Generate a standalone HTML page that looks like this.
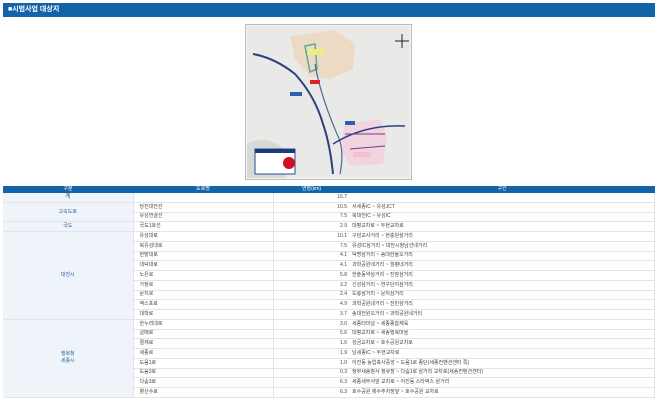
<!DOCTYPE html>
<html><head><meta charset="utf-8"><style>
body{margin:0;width:658px;height:403px;background:#fff;font-family:"Liberation Sans","Noto Sans CJK KR",sans-serif;overflow:hidden;position:relative}
.hd{position:absolute;left:3px;top:3px;width:652px;height:14px;background:#1264a8;color:#fff;font-size:7px;line-height:14px;padding-left:5px;box-sizing:border-box;font-weight:bold}
table{position:absolute;left:3px;top:186px;width:652px;border-collapse:collapse;font-size:5px;color:#444;table-layout:fixed}
td,th{border-bottom:1px solid #e4e4e4;border-right:1px solid #e4e4e4;height:8.75px;padding:0;line-height:7px;white-space:nowrap;overflow:hidden}
th{background:#1264a8;color:#fff;height:7px;line-height:7px;font-weight:normal;border:none}
.g{background:#eef4fa;color:#2a62a0;text-align:center}
.n{padding-left:6px}
.r{text-align:right;padding-right:3px;border-right:none}
.s{padding-left:2px}
</style></head><body>
<div class="hd">■시범사업 대상지</div>
<svg style="position:absolute;left:245px;top:24px" width="167" height="156" viewBox="0 0 167 156">
<rect x="0.5" y="0.5" width="166" height="155" fill="#f4f4f2" stroke="#bbb"/>
<rect x="2" y="2" width="163" height="152" fill="#e9eae7"/>
<path d="M2 120 Q20 110 40 125 L40 154 L2 154Z" fill="#d8d8d4"/>
<path d="M45 12 L90 6 L110 20 L108 45 L85 55 L65 52 L50 35Z" fill="#ecd8c0" opacity=".9"/>
<path d="M100 100 L135 95 L142 112 L138 140 L105 142 L95 125Z" fill="#f0d4e0"/>
<path d="M60 22 L70 20 L72 45 L65 48Z" fill="none" stroke="#5a9" stroke-width="1.5"/>
<path d="M8 30 Q30 34 50 50 Q70 72 78 100 Q85 120 88 150" fill="none" stroke="#2e3f80" stroke-width="2"/>
<path d="M70 40 Q75 70 92 110 Q100 125 95 150" fill="none" stroke="#4a6a9a" stroke-width="1.2"/>
<path d="M88 120 Q120 100 160 102" fill="none" stroke="#2e3f80" stroke-width="1.5"/>
<path d="M100 110 L140 110 M105 125 L140 122" stroke="#7a3a7a" stroke-width="1"/>
<rect x="62" y="25" width="18" height="6" fill="#e8f080"/>
<rect x="65" y="56" width="10" height="4" fill="#e0202a"/>
<rect x="45" y="68" width="12" height="4" fill="#2a60b0"/>
<rect x="100" y="97" width="10" height="4" fill="#2a60b0"/>
<rect x="108" y="128" width="18" height="5" fill="#f4c0d0"/>
<rect x="10" y="125" width="40" height="25" fill="#fff" stroke="#2a4a90"/>
<rect x="10" y="125" width="40" height="4" fill="#1a3a80"/>
<circle cx="44" cy="139" r="6" fill="#d01020"/>
<path d="M157 10 V24 M150 17 H164" stroke="#123" stroke-width="1"/>
</svg>
<table>
<colgroup><col style="width:130px"><col style="width:140px"><col style="width:77px"><col></colgroup>
<tr><th>구분</th><th>도로명</th><th>연장(km)</th><th>구간</th></tr>
<tr><td class="g" style="font-size:6px">계</td><td></td><td class="r">16.7</td><td></td></tr>
<tr><td class="g" rowspan="2">고속도로</td><td class="n">당진대전선</td><td class="r">10.5</td><td class="s">서세종IC ~ 유성JCT</td></tr>
<tr><td class="n">유성연결선</td><td class="r">7.5</td><td class="s">북대전IC ~ 유성IC</td></tr>
<tr><td class="g">국도</td><td class="n">국도1호선</td><td class="r">2.9</td><td class="s">대평교차로 ~ 두현교차로</td></tr>
<tr><td class="g" rowspan="9">대전시</td><td class="n">유성대로</td><td class="r">10.1</td><td class="s">구암교사거리 ~ 현충원삼거리</td></tr>
<tr><td class="n">북유성대로</td><td class="r">7.5</td><td class="s">유성IC삼거리 ~ 대전시청남선네거리</td></tr>
<tr><td class="n">한밭대로</td><td class="r">4.1</td><td class="s">덕명삼거리 ~ 송대한울오거리</td></tr>
<tr><td class="n">대덕대로</td><td class="r">4.1</td><td class="s">과학공원네거리 ~ 월평네거리</td></tr>
<tr><td class="n">노은로</td><td class="r">5.8</td><td class="s">한솔동약상거리 ~ 진잠삼거리</td></tr>
<tr><td class="n">가정로</td><td class="r">3.2</td><td class="s">신성삼거리 ~ 연구단지삼거리</td></tr>
<tr><td class="n">문지로</td><td class="r">2.4</td><td class="s">도룡삼거리 ~ 문지삼거리</td></tr>
<tr><td class="n">엑스포로</td><td class="r">4.9</td><td class="s">과학공원네거리 ~ 전민삼거리</td></tr>
<tr><td class="n">대학로</td><td class="r">3.7</td><td class="s">송대전원오거리 ~ 과학공원네거리</td></tr>
<tr><td class="g" rowspan="8">행복청<br>세종시</td><td class="n">한누리대로</td><td class="r">3.0</td><td class="s">세종터미널 ~ 세종종합체육</td></tr>
<tr><td class="n">갈매로</td><td class="r">5.6</td><td class="s">대평교차로 ~ 세종행복마을</td></tr>
<tr><td class="n">절재로</td><td class="r">1.6</td><td class="s">성금교차로 ~ 호수공원교차로</td></tr>
<tr><td class="n">세종로</td><td class="r">1.9</td><td class="s">남세종IC ~ 두현교차로</td></tr>
<tr><td class="n">도움1로</td><td class="r">1.0</td><td class="s">어진동 농업축사중앙 ~ 도움1로 종단(세종컨벤션센터 쪽)</td></tr>
<tr><td class="n">도움3로</td><td class="r">0.3</td><td class="s">정부세종청사 정류장 ~ 다솜1로 삼거리 교차로(세종컨벤션센터)</td></tr>
<tr><td class="n">다솜3로</td><td class="r">6.3</td><td class="s">세종세무서앞 교차로 ~ 어진동 스타벅스 삼거리</td></tr>
<tr><td class="n">향산수로</td><td class="r">6.3</td><td class="s">호수공원 제수주차장앞 ~ 호수공원 교차로</td></tr>
</table>
</body></html>
